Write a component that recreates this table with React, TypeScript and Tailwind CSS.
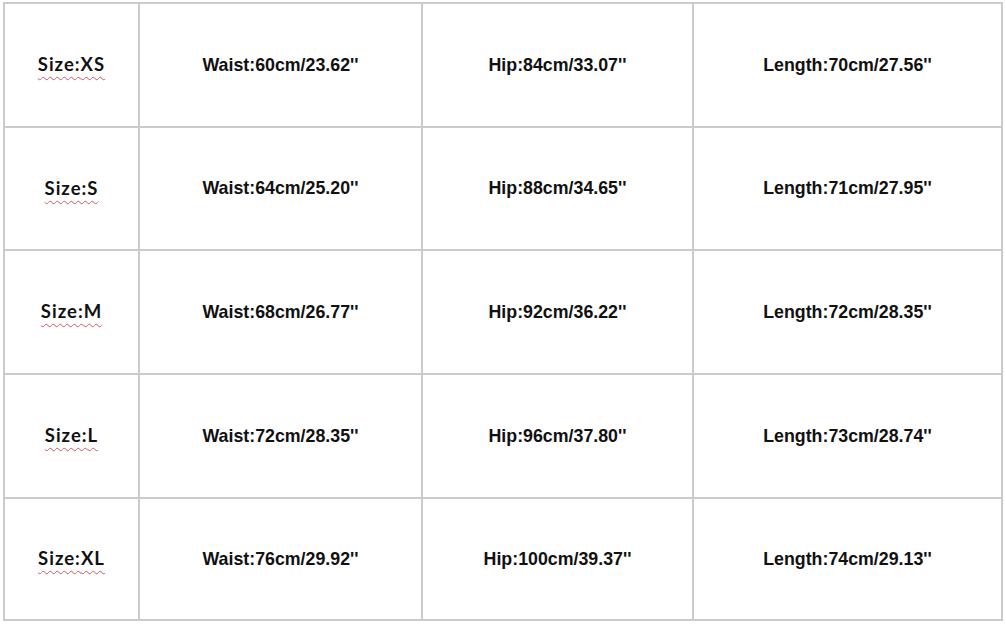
import React from 'react';

const rows = [
  { size: 'XS', waist: '60cm/23.62', hip: '84cm/33.07', length: '70cm/27.56' },
  { size: 'S', waist: '64cm/25.20', hip: '88cm/34.65', length: '71cm/27.95' },
  { size: 'M', waist: '68cm/26.77', hip: '92cm/36.22', length: '72cm/28.35' },
  { size: 'L', waist: '72cm/28.35', hip: '96cm/37.80', length: '73cm/28.74' },
  { size: 'XL', waist: '76cm/29.92', hip: '100cm/39.37', length: '74cm/29.13' },
];

function Cell({ children }: { children: React.ReactNode }) {
  return (
    <div className="flex items-center justify-center border-b-2 border-r-2 border-[#cbcbcb]">
      {children}
    </div>
  );
}

function Value({ text }: { text: string }) {
  return (
    <span className="font-['Liberation_Sans',Arial,sans-serif] text-[17.8px] font-bold text-[#111]">
      {text}''
    </span>
  );
}

export default function App() {
  return (
    <div className="h-[624px] w-[1006px] bg-white pl-[3px] pt-[2px]">
      <div className="grid grid-cols-[135px_283px_271px_309px] grid-rows-[124px_123px_124px_124px_122px] w-fit border-l-2 border-t-2 border-[#cbcbcb]">
        {rows.map(r => (
          <React.Fragment key={r.size}>
            <Cell>
              <span className="font-['Lato','Open_Sans',sans-serif] text-[18.5px] font-bold tracking-[1px] text-[#111] underline decoration-wavy decoration-[#c85a6a] decoration-1 underline-offset-[5px]">
                Size:{r.size}
              </span>
            </Cell>
            <Cell>
              <Value text={`Waist:${r.waist}`} />
            </Cell>
            <Cell>
              <Value text={`Hip:${r.hip}`} />
            </Cell>
            <Cell>
              <Value text={`Length:${r.length}`} />
            </Cell>
          </React.Fragment>
        ))}
      </div>
    </div>
  );
}
